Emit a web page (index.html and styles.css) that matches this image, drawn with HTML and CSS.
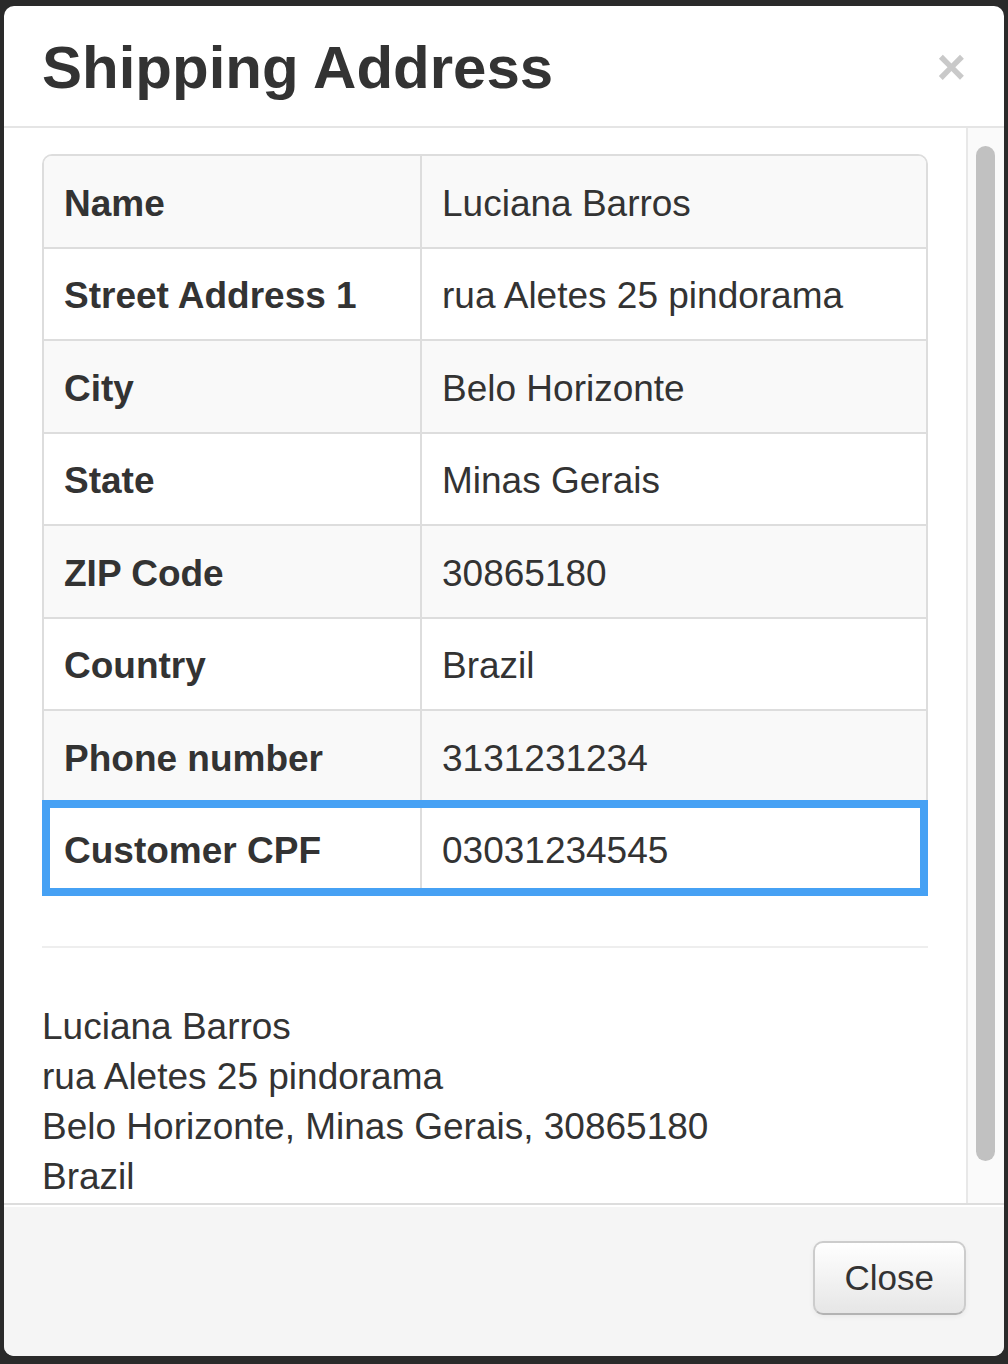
FILE: index.html
```html
<!DOCTYPE html>
<html lang="en">
<head>
    <meta charset="UTF-8">
    <title>Shipping Address</title>
    <link rel="stylesheet" href="styles.css">
</head>
<body>
    <div class="modal">
        <div class="modal-header">
            <h3 class="modal-title">Shipping Address</h3>
            <button class="close" type="button">&times;</button>
        </div>
        <div class="modal-body">
            <div class="modal-content">
                <table class="addr-table">
                    <tbody>
                        <tr><th>Name</th><td>Luciana Barros</td></tr>
                        <tr><th>Street Address 1</th><td>rua Aletes 25 pindorama</td></tr>
                        <tr><th>City</th><td>Belo Horizonte</td></tr>
                        <tr><th>State</th><td>Minas Gerais</td></tr>
                        <tr><th>ZIP Code</th><td>30865180</td></tr>
                        <tr><th>Country</th><td>Brazil</td></tr>
                        <tr><th>Phone number</th><td>3131231234</td></tr>
                        <tr class="is-selected"><th>Customer CPF</th><td>03031234545</td></tr>
                    </tbody>
                </table>
                <hr>
                <address class="addr-block">
                    Luciana Barros<br>
                    rua Aletes 25 pindorama<br>
                    Belo Horizonte, Minas Gerais, 30865180<br>
                    Brazil
                </address>
            </div>
            <!-- mac style scroll rail -->
            <div class="scroll-rail">
                <div class="scroll-thumb"></div>
            </div>
        </div>
        <div class="modal-footer">
            <button class="btn" type="button">Close</button>
        </div>
    </div>
</body>
</html>
```

FILE: styles.css
```css
body {
    margin: 0;
    background: #2a2a2a;
    font-family: 'Liberation Sans', Arial, sans-serif;
    color: #333;
}
.modal {
    width: 1000px;
    height: 1350px;
    margin: 6px 0 0 4px;
    background: #fff;
    border-radius: 10px;
    overflow: hidden;
    display: flex;
    flex-direction: column;
}
.modal-header {
    display: flex;
    justify-content: space-between;
    align-items: center;
    padding: 24px 38px 21px 38px;
    border-bottom: 2px solid #e5e5e5;
}
.modal-title {
    margin: 0;
    font-size: 60px;
    line-height: 75px;
    font-weight: bold;
    color: #333;
}
.close {
    background: none;
    border: none;
    padding: 0;
    margin-top: -2px;
    font-family: 'Liberation Sans', Arial, sans-serif;
    font-size: 50px;
    line-height: 50px;
    font-weight: bold;
    color: #c9c9c9;
    cursor: pointer;
}
.modal-body {
    display: flex;
    height: 1075px;
}
.modal-content {
    flex: 1;
    overflow: hidden;
    padding: 26px 38px 0 38px;
}
.scroll-rail {
    width: 19px;
    border-left: 2px solid #e8e8e8;
    background: #fafafa;
    padding: 18px 9px 0 8px;
}
.scroll-thumb {
    width: 19px;
    height: 1015px;
    background: #c1c1c1;
    border-radius: 10px;
}
.addr-table {
    width: 100%;
    border-collapse: separate;
    border-spacing: 0;
    border: 2px solid #ddd;
    border-radius: 10px;
    margin-bottom: 50px;
    font-size: 37px;
}
.addr-table th, .addr-table td {
    padding: 22.5px 20px 18px 20px;
    line-height: 50px;
    text-align: left;
    vertical-align: top;
    border-top: 2px solid #ddd;
}
.addr-table th {
    width: 336px;
    font-weight: bold;
}
.addr-table td {
    border-left: 2px solid #ddd;
}
.addr-table tr:first-child th, .addr-table tr:first-child td {
    border-top: 0;
}
.addr-table tr:first-child th {
    border-top-left-radius: 8px;
}
.addr-table tr:first-child td {
    border-top-right-radius: 8px;
}
.addr-table tr:nth-child(odd) th, .addr-table tr:nth-child(odd) td {
    background: #f9f9f9;
}
.addr-table tr.is-selected {
    outline: 8px solid #46a1f4;
    outline-offset: -6px;
}
hr {
    margin: 0 0 52px 0;
    border: 0;
    border-top: 2px solid #eee;
    border-bottom: 2px solid #fff;
}
.addr-block {
    margin: 0;
    font-style: normal;
    font-size: 37px;
    line-height: 50px;
}
.modal-footer {
    flex: 1;
    background: #f5f5f5;
    border-top: 2px solid #ddd;
    box-shadow: inset 0 2px 0 #fff;
    padding: 36px 38px 0 38px;
    text-align: right;
}
.btn {
    font-family: 'Liberation Sans', Arial, sans-serif;
    font-size: 35px;
    line-height: 50px;
    color: #333;
    padding: 10px 30px;
    border: 2px solid #ccc;
    border-bottom-color: #b3b3b3;
    border-radius: 10px;
    background: linear-gradient(to bottom, #fff 0%, #e6e6e6 100%);
    box-shadow: inset 0 2px 0 rgba(255,255,255,0.2), 0 2px 5px rgba(0,0,0,0.05);
    cursor: pointer;
}
```
